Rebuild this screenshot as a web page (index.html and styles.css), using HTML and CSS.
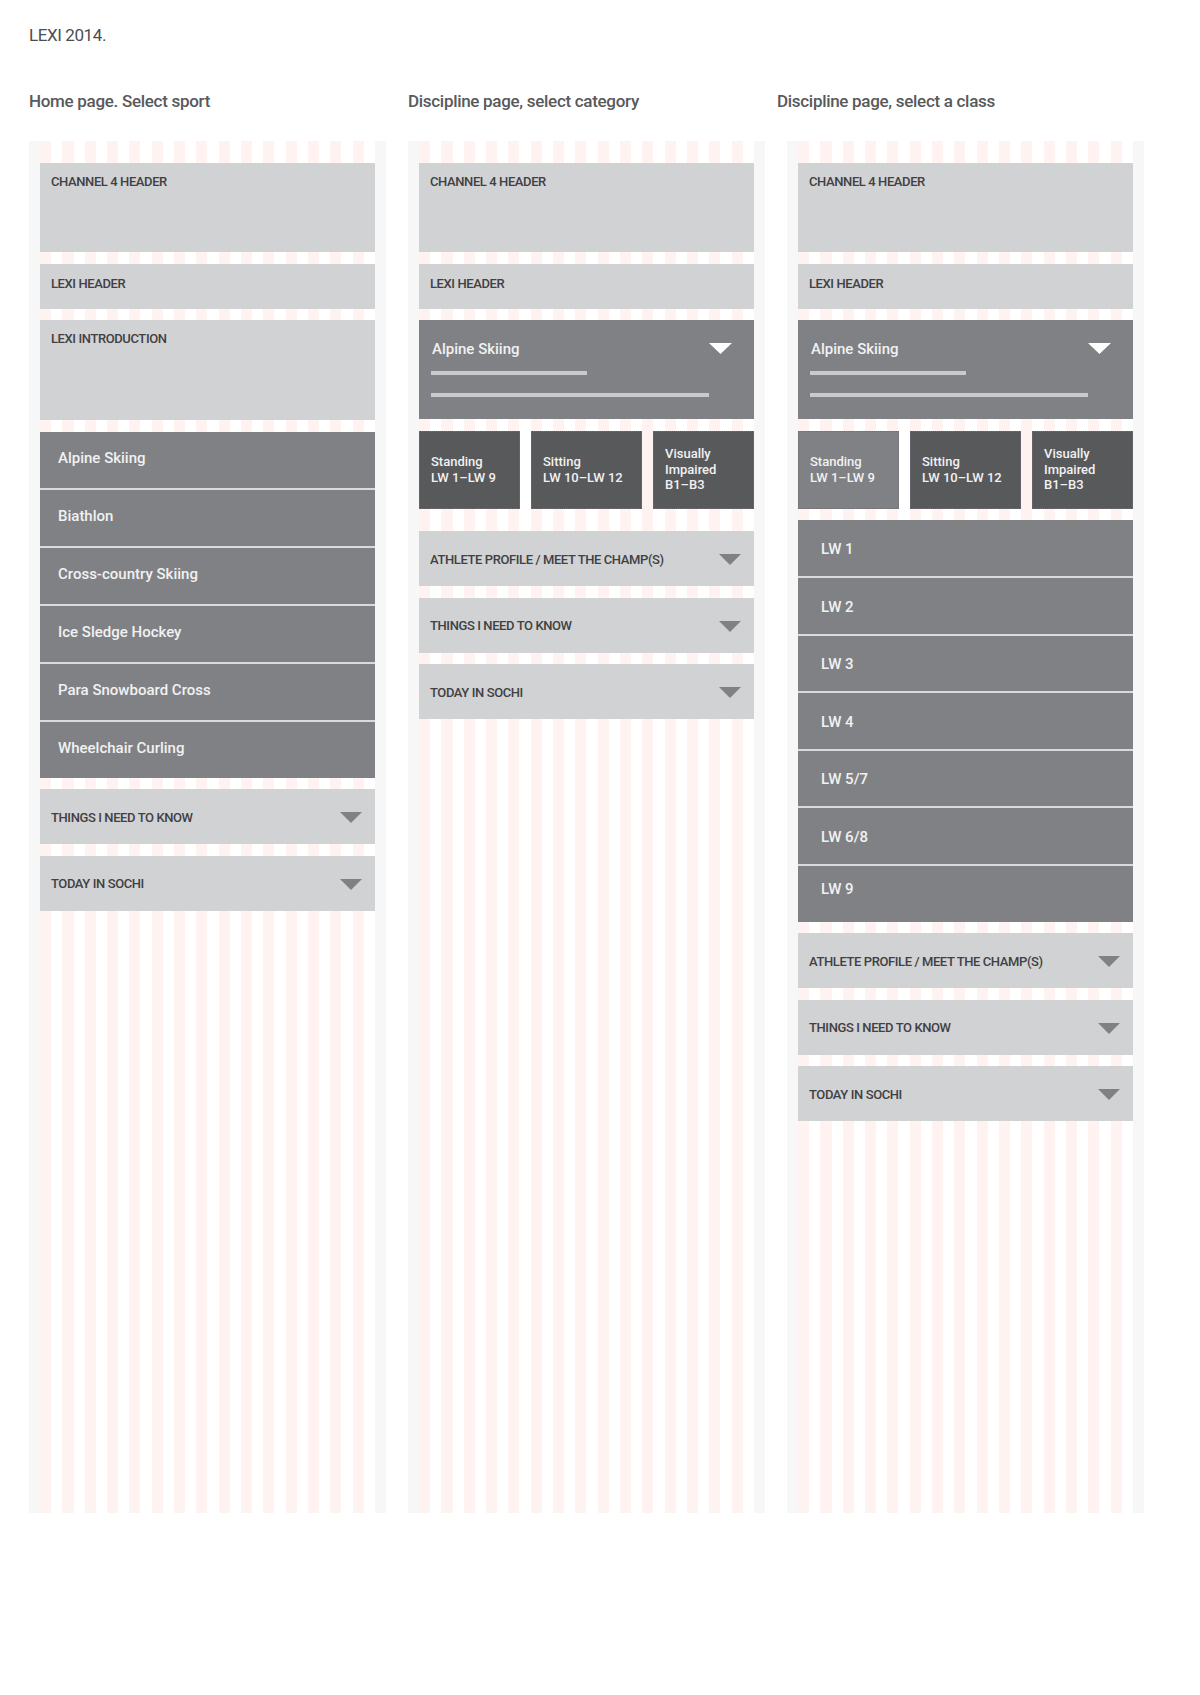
FILE: index.html
```html
<!DOCTYPE html>
<html lang="en">
<head>
  <meta charset="UTF-8" />
  <meta name="viewport" content="width=device-width, initial-scale=1.0"/>
  <title>LEXI 2014 wireframes</title>
  <link rel="stylesheet" href="styles.css">
</head>
<body>

<div class="page">
  <p class="doc-title">LEXI 2014.</p>

  <div class="boards">

    <!-- Home page -->
    <section class="board">
      <h2 class="board-title">Home page. Select sport</h2>
      <div class="frame">
        <div class="grid">
          <div class="block block-channel">CHANNEL 4 HEADER</div>
          <div class="block block-lexi">LEXI HEADER</div>
          <div class="block block-intro">LEXI INTRODUCTION</div>
          <ul class="menu-list sport-list">
            <li>Alpine Skiing</li>
            <li>Biathlon</li>
            <li>Cross-country Skiing</li>
            <li>Ice Sledge Hockey</li>
            <li>Para Snowboard Cross</li>
            <li>Wheelchair Curling</li>
          </ul>
          <div class="accordion">
            <span>THINGS I NEED TO KNOW</span>
            <svg class="arrow" width="22" height="11" viewBox="0 0 22 11"><path d="M0 0H22L11 11Z"/></svg>
          </div>
          <div class="accordion">
            <span>TODAY IN SOCHI</span>
            <svg class="arrow" width="22" height="11" viewBox="0 0 22 11"><path d="M0 0H22L11 11Z"/></svg>
          </div>
        </div>
      </div>
    </section>

    <!-- Discipline page, category -->
    <section class="board">
      <h2 class="board-title">Discipline page, select category</h2>
      <div class="frame">
        <div class="grid">
          <div class="block block-channel">CHANNEL 4 HEADER</div>
          <div class="block block-lexi">LEXI HEADER</div>
          <div class="discipline">
            <div class="discipline-head">
              <span>Alpine Skiing</span>
              <svg class="arrow arrow-white" width="23" height="11" viewBox="0 0 23 11"><path d="M0 0H23L11.5 11Z"/></svg>
            </div>
            <div class="bar bar-short"></div>
            <div class="bar bar-long"></div>
          </div>
          <div class="categories">
            <div class="category">Standing<br>LW 1–LW 9</div>
            <div class="category">Sitting<br>LW 10–LW 12</div>
            <div class="category">Visually<br>Impaired<br>B1–B3</div>
          </div>
          <div class="accordion after-categories">
            <span>ATHLETE PROFILE / MEET THE CHAMP(S)</span>
            <svg class="arrow" width="22" height="11" viewBox="0 0 22 11"><path d="M0 0H22L11 11Z"/></svg>
          </div>
          <div class="accordion">
            <span>THINGS I NEED TO KNOW</span>
            <svg class="arrow" width="22" height="11" viewBox="0 0 22 11"><path d="M0 0H22L11 11Z"/></svg>
          </div>
          <div class="accordion">
            <span>TODAY IN SOCHI</span>
            <svg class="arrow" width="22" height="11" viewBox="0 0 22 11"><path d="M0 0H22L11 11Z"/></svg>
          </div>
        </div>
      </div>
    </section>

    <!-- Discipline page, class -->
    <section class="board">
      <h2 class="board-title board-title-shift">Discipline page, select a class</h2>
      <div class="frame">
        <div class="grid">
          <div class="block block-channel">CHANNEL 4 HEADER</div>
          <div class="block block-lexi">LEXI HEADER</div>
          <div class="discipline">
            <div class="discipline-head">
              <span>Alpine Skiing</span>
              <svg class="arrow arrow-white" width="23" height="11" viewBox="0 0 23 11"><path d="M0 0H23L11.5 11Z"/></svg>
            </div>
            <div class="bar bar-short"></div>
            <div class="bar bar-long"></div>
          </div>
          <div class="categories">
            <div class="category active">Standing<br>LW 1–LW 9</div>
            <div class="category">Sitting<br>LW 10–LW 12</div>
            <div class="category">Visually<br>Impaired<br>B1–B3</div>
          </div>
          <ul class="menu-list class-list">
            <li>LW 1</li>
            <li>LW 2</li>
            <li>LW 3</li>
            <li>LW 4</li>
            <li>LW 5/7</li>
            <li>LW 6/8</li>
            <li>LW 9</li>
          </ul>
          <div class="accordion">
            <span>ATHLETE PROFILE / MEET THE CHAMP(S)</span>
            <svg class="arrow" width="22" height="11" viewBox="0 0 22 11"><path d="M0 0H22L11 11Z"/></svg>
          </div>
          <div class="accordion">
            <span>THINGS I NEED TO KNOW</span>
            <svg class="arrow" width="22" height="11" viewBox="0 0 22 11"><path d="M0 0H22L11 11Z"/></svg>
          </div>
          <div class="accordion">
            <span>TODAY IN SOCHI</span>
            <svg class="arrow" width="22" height="11" viewBox="0 0 22 11"><path d="M0 0H22L11 11Z"/></svg>
          </div>
        </div>
      </div>
    </section>

  </div>
</div>

</body>
</html>
```

FILE: styles.css
```css
* {
  margin: 0;
  padding: 0;
  box-sizing: border-box;
}

body {
  font-family: Roboto, "Liberation Sans", sans-serif;
  background: #fff;
  color: #414042;
}

.page {
  padding: 25px 0 0 29px;
}

.doc-title {
  font-size: 17px;
  line-height: 20px;
  letter-spacing: -0.4px;
  color: #4d4d4f;
}

.boards {
  display: flex;
  gap: 22px;
  margin-top: 46px;
}

.board {
  width: 357px;
}

.board-title {
  font-size: 17px;
  font-weight: 500;
  line-height: 20px;
  letter-spacing: -0.3px;
  color: #58595b;
  margin-bottom: 30px;
}

.board-title-shift { margin-left: -10px; }

/* grid frame with column stripes */
.frame {
  height: 1372px;
  padding: 0 11px;
  background: #f7f7f7;
}

.grid {
  height: 100%;
  padding-top: 22px;
  display: flex;
  flex-direction: column;
  gap: 11.5px;
  background: repeating-linear-gradient(90deg, #fef3f1 0 11.17px, #fff 11.17px 22.33px);
}

/* light placeholder blocks */
.block {
  background: #d1d2d4;
  font-size: 13px;
  font-weight: 500;
  letter-spacing: -0.4px;
  line-height: 16px;
  padding: 11px 11px 0;
}

.block-channel { height: 89px; }
.block-lexi { height: 45px; padding-top: 12px; }
.block-intro { height: 100px; }

/* dark menu lists */
.menu-list {
  list-style: none;
  background: #808184;
}

.menu-list li {
  height: 58px;
  color: #f1f1f2;
  font-size: 15px;
  font-weight: 500;
  line-height: 18px;
  border-top: 2px solid #d9dadb;
}

.menu-list li:first-child {
  height: 56px;
  border-top: none;
}

.sport-list li { padding: 17.5px 18px 0; }

.class-list li { height: 57.6px; padding: 19.5px 23px 0; }
.class-list li:last-child { padding-top: 14.5px; }

/* accordions */
.accordion {
  height: 55px;
  background: #d1d2d4;
  font-size: 13px;
  font-weight: 500;
  letter-spacing: -0.4px;
  line-height: 16px;
  padding: 2px 13px 0 11px;
  display: flex;
  align-items: center;
  justify-content: space-between;
}

.after-categories { margin-top: 11px; }

.arrow { fill: #808184; flex-shrink: 0; }
.arrow-white { fill: #fff; }

/* discipline header */
.discipline {
  height: 99px;
  background: #808184;
  padding: 19.5px 22px 0 13px;
}

.discipline-head {
  display: flex;
  align-items: center;
  justify-content: space-between;
  color: #f1f1f2;
  font-size: 15px;
  font-weight: 500;
  line-height: 18px;
}

.bar {
  height: 4px;
  margin-left: -1px;
  background: #c9cacc;
}

.bar-short { width: 156px; margin-top: 13.5px; }
.bar-long { width: 278px; margin-top: 18px; }

/* category buttons */
.categories {
  display: grid;
  grid-template-columns: 101px 111px 101px;
  gap: 11px;
}

.category {
  height: 78px;
  background: #58595b;
  border: 1px dotted #6d6e71;
  color: #f1f1f2;
  font-size: 13px;
  font-weight: 500;
  line-height: 15.5px;
  padding: 0 11px;
  display: flex;
  align-items: center;
}

.category.active { background: #808184; }
```
